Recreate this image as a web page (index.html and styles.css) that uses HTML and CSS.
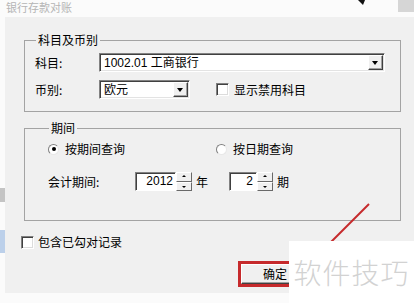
FILE: index.html
```html
<!DOCTYPE html>
<html lang="zh-CN">
<head>
    <meta charset="UTF-8">
    <meta name="viewport" content="width=device-width, initial-scale=1.0">
    <title>银行存款对账</title>
    <link rel="stylesheet" href="styles.css">
</head>
<body>
    <div class="titlebar">
        <span class="title">银行存款对账</span>
        <span class="corner"></span>
    </div>
    <div class="main">
        <div class="edge">
            <span class="edge-gray"></span>
            <span class="edge-blue"></span>
        </div>
        <div class="dialog">
            <fieldset class="group group-account">
                <legend>科目及币别</legend>
                <div class="row">
                    <span class="label">科目:</span>
                    <div class="combo combo-wide">
                        <span class="combo-text">1002.01 工商银行</span>
                        <span class="drop"></span>
                    </div>
                </div>
                <div class="row row-gap">
                    <span class="label">币别:</span>
                    <div class="combo combo-short">
                        <span class="combo-text">欧元</span>
                        <span class="drop"></span>
                    </div>
                    <span class="check check-disabled"></span>
                    <span class="check-text">显示禁用科目</span>
                </div>
            </fieldset>

            <fieldset class="group group-period">
                <legend>期间</legend>
                <div class="row row-radio">
                    <div class="option">
                        <span class="radio checked"></span>
                        <span class="option-text">按期间查询</span>
                    </div>
                    <div class="option">
                        <span class="radio"></span>
                        <span class="option-text">按日期查询</span>
                    </div>
                </div>
                <div class="row row-spin">
                    <span class="label label-period">会计期间:</span>
                    <div class="spin">
                        <span class="spin-input spin-year">2012</span>
                        <span class="spin-buttons"><span class="up"></span><span class="down"></span></span>
                    </div>
                    <span class="unit">年</span>
                    <div class="spin spin-gap">
                        <span class="spin-input spin-month">2</span>
                        <span class="spin-buttons"><span class="up"></span><span class="down"></span></span>
                    </div>
                    <span class="unit">期</span>
                </div>
            </fieldset>

            <div class="row row-include">
                <span class="check"></span>
                <span class="check-text">包含已勾对记录</span>
            </div>

            <div class="actions">
                <button class="btn marked">确定</button>
            </div>
        </div>
    </div>

    <svg class="annotation" width="414" height="303" viewBox="0 0 414 303">
        <line x1="369" y1="204" x2="311" y2="262" stroke="#c62a2c" stroke-width="2"/>
        <polygon points="358,0 365,0 363,5 361,3" fill="#111"/>
    </svg>
    <div class="watermark">软件技巧</div>
</body>
</html>
```

FILE: styles.css
```css
html, body {
    margin: 0;
    padding: 0;
}
body {
    width: 414px;
    height: 303px;
    overflow: hidden;
    position: relative;
    background-color: #FBFBFB;
    color: #000000;
    font-family: "Liberation Sans", "Noto Sans CJK SC", sans-serif;
    font-size: 12px;
    line-height: 14px;
}
.titlebar {
    height: 17px;
    box-sizing: border-box;
    padding-top: 1px;
    display: flex;
    justify-content: space-between;
    align-items: flex-start;
}
.title {
    margin-left: 6px;
    font-size: 11px;
    line-height: 13px;
    color: #B5B5B5;
    font-family: "Noto Sans CJK SC", sans-serif;
}
.corner {
    width: 16px;
    height: 12px;
    margin-top: -1px;
    background-color: #D6D6D6;
}
.main {
    display: flex;
}
.edge {
    width: 5px;
    display: flex;
    flex-direction: column;
}
.edge-gray {
    height: 14px;
    margin-top: 171px;
    background-color: #C4C4C4;
}
.edge-blue {
    height: 23px;
    margin-top: 28px;
    background-color: #BCD0EA;
}
.dialog {
    flex: 1;
    height: 276px;
    box-sizing: border-box;
    padding: 16px 13px 0 19px;
    background-color: #F0F0F0;
}
.group {
    width: 377px;
    box-sizing: border-box;
    margin: 0;
    border: 1px solid #A3A3A3;
    padding: 0 14px 0 10px;
}
.group legend {
    margin-left: 1px;
    padding: 0 2px;
    line-height: 14px;
    font-family: "Noto Sans CJK SC", sans-serif;
}
.group-account {
    padding-bottom: 12px;
}
.group-period {
    margin-top: 9px;
    padding-left: 23px;
    padding-bottom: 29px;
}
.row {
    display: flex;
    align-items: center;
}
.group-account .row {
    margin-top: 6px;
}
.group-account .row-gap {
    margin-top: 8px;
}
.label {
    width: 64px;
    font-family: "Noto Sans CJK SC", sans-serif;
}
.combo {
    height: 19px;
    box-sizing: border-box;
    display: flex;
    align-items: center;
    justify-content: space-between;
    background: #FFFFFF;
    border: 1px solid;
    border-color: #828282 #FFFFFF #FFFFFF #828282;
    box-shadow: inset 1px 1px 0 #404040, inset -1px -1px 0 #E3E3E3;
}
.combo-wide {
    width: 286px;
}
.combo-short {
    width: 91px;
}
.combo-text {
    padding-left: 4px;
    white-space: nowrap;
}
.drop {
    width: 15px;
    height: 15px;
    box-sizing: border-box;
    margin-right: 1px;
    position: relative;
    background: #F0F0F0;
    border: 1px solid;
    border-color: #FFFFFF #404040 #404040 #FFFFFF;
    box-shadow: inset -1px -1px 0 #A0A0A0;
}
.drop::after {
    content: "";
    position: absolute;
    left: 3px;
    top: 5px;
    border-left: 3.5px solid transparent;
    border-right: 3.5px solid transparent;
    border-top: 4px solid #000000;
}
.check {
    width: 13px;
    height: 13px;
    box-sizing: border-box;
    background: #FFFFFF;
    border: 1px solid;
    border-color: #808080 #FFFFFF #FFFFFF #808080;
    box-shadow: inset 1px 1px 0 #404040, inset -1px -1px 0 #DCDCDC;
}
.check-disabled {
    margin-left: 26px;
}
.check-text {
    margin-left: 5px;
    font-family: "Noto Sans CJK SC", sans-serif;
}
.row-radio {
    margin-top: 7px;
    height: 14px;
}
.option {
    display: flex;
    align-items: center;
    width: 168px;
}
.radio {
    width: 11px;
    height: 11px;
    box-sizing: border-box;
    border-radius: 50%;
    position: relative;
    background: #FFFFFF;
    border: 1px solid;
    border-color: #808080 #E8E8E8 #E8E8E8 #808080;
}
.radio.checked::after {
    content: "";
    position: absolute;
    left: 2.5px;
    top: 2.5px;
    width: 4px;
    height: 4px;
    border-radius: 50%;
    background: #000000;
}
.option-text {
    margin-left: 6px;
    font-family: "Noto Sans CJK SC", sans-serif;
}
.row-spin {
    margin-top: 16px;
}
.label-period {
    width: 87px;
}
.spin {
    display: flex;
    height: 19px;
}
.spin-gap {
    margin-left: 21px;
}
.spin-input {
    box-sizing: border-box;
    height: 19px;
    padding-right: 2px;
    text-align: right;
    line-height: 17px;
    background: #FFFFFF;
    border: 1px solid;
    border-color: #828282 #FFFFFF #FFFFFF #828282;
    box-shadow: inset 1px 1px 0 #404040;
}
.spin-year {
    width: 41px;
}
.spin-month {
    width: 28px;
    padding-right: 3px;
}
.spin-buttons {
    width: 16px;
    display: flex;
    flex-direction: column;
}
.spin-buttons span {
    flex: 1;
    position: relative;
    box-sizing: border-box;
    background: #F0F0F0;
    border: 1px solid;
    border-color: #FFFFFF #696969 #696969 #FFFFFF;
}
.spin-buttons .up::after,
.spin-buttons .down::after {
    content: "";
    position: absolute;
    left: 5px;
    border-left: 2px solid transparent;
    border-right: 2px solid transparent;
}
.spin-buttons .up::after {
    top: 2px;
    border-bottom: 2px solid #000000;
}
.spin-buttons .down::after {
    top: 3px;
    border-top: 2px solid #000000;
}
.unit {
    margin-left: 4px;
    font-family: "Noto Sans CJK SC", sans-serif;
}
.row-include {
    margin-top: 14px;
    margin-left: -3px;
}
.row-include .check-text {
    margin-left: 4px;
}
.actions {
    margin-top: 15px;
    padding-left: 217px;
    display: flex;
}
.btn {
    width: 68px;
    height: 20px;
    padding: 0;
    box-sizing: border-box;
    font-family: "Noto Sans CJK SC", sans-serif;
    font-size: 12px;
    line-height: 14px;
    color: #000000;
    background: #F0F0F0;
    border: 1px solid;
    border-color: #FFFFFF #404040 #404040 #FFFFFF;
    box-shadow: inset -1px -1px 0 #A0A0A0;
}
.marked {
    outline: 3px solid #C62A2C;
    outline-offset: 0;
}
.annotation {
    position: absolute;
    left: 0;
    top: 0;
    pointer-events: none;
}
.watermark {
    position: absolute;
    left: 289px;
    top: 241px;
    width: 125px;
    height: 62px;
    display: flex;
    align-items: center;
    justify-content: center;
    background: #FFFFFF;
    color: #D2D2D2;
    font-family: "Noto Sans CJK SC", sans-serif;
    font-weight: 300;
    font-size: 28px;
    letter-spacing: 1px;
}
```
